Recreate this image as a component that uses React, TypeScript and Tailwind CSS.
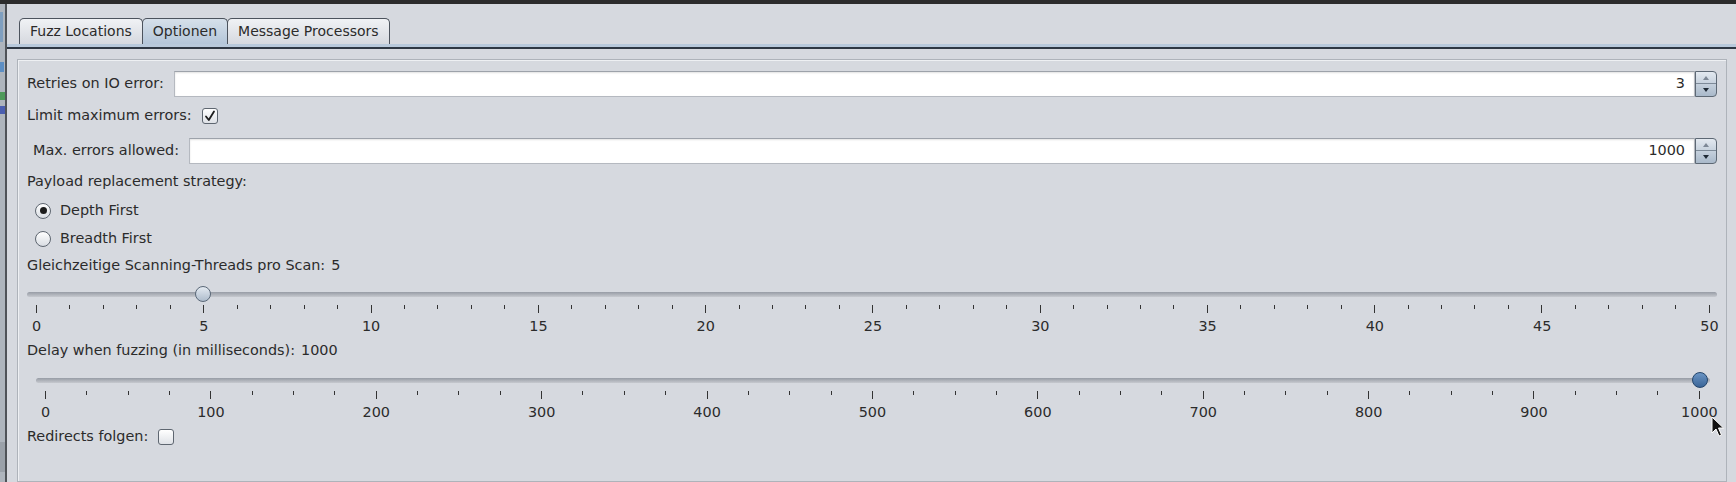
import React from 'react';

const TEXT = 'text-[14.4px] text-[#2b2b2b]';

function Spinner() {
  return (
    <div className="flex h-[26px] w-[22px] flex-col overflow-hidden rounded-r-[4px] border border-[#5d6874] bg-gradient-to-b from-[#e3e9f0] to-[#a9b9ca]">
      <div className="flex flex-1 items-center justify-center border-b border-[#7d8a98]">
        <div className="h-0 w-0 border-x-[3px] border-b-[4px] border-x-transparent border-b-[#7d8896]" />
      </div>
      <div className="flex flex-1 items-center justify-center">
        <div className="h-0 w-0 border-x-[3px] border-t-[4px] border-x-transparent border-t-[#1f2a36]" />
      </div>
    </div>
  );
}

function NumberField({ value }: { value: string }) {
  return (
    <div className="flex flex-1 items-center">
      <div className={`flex h-[26px] flex-1 items-center justify-end border border-[#b5b9c0] border-t-[#9da2aa] bg-white pr-[9px] shadow-[inset_0_1px_2px_rgba(0,0,0,0.12)] ${TEXT}`}>
        {value}
      </div>
      <Spinner />
    </div>
  );
}

function Checkbox({ checked }: { checked?: boolean }) {
  return (
    <div className="flex h-[16px] w-[16px] items-center justify-center rounded-[3px] border border-[#5e6670] bg-gradient-to-b from-[#ffffff] to-[#dfe2e7]">
      {checked && (
        <svg width="12" height="12" viewBox="0 0 12 12">
          <path d="M2 6.5 L4.8 10 L10 1.5" fill="none" stroke="#1e1e1e" strokeWidth="1.8" strokeLinecap="round" strokeLinejoin="round" />
        </svg>
      )}
    </div>
  );
}

function Radio({ checked, label }: { checked?: boolean; label: string }) {
  return (
    <div className="flex items-center gap-[9px] pl-[8px]">
      <div className="flex h-[16px] w-[16px] items-center justify-center rounded-full border border-[#5e6670] bg-gradient-to-b from-[#ffffff] to-[#d9dde3]">
        {checked && <div className="h-[7px] w-[7px] rounded-full bg-[#1c1c1c]" />}
      </div>
      <span className={TEXT}>{label}</span>
    </div>
  );
}

interface SliderProps {
  max: number;
  step: number;
  major: number;
  value: number;
  dark?: boolean;
  outer: string;
  thumbArea: string;
  tickArea: string;
}

function Slider({ max, step, major, value, dark, outer, thumbArea, tickArea }: SliderProps) {
  const ticks = Array.from({ length: max / step + 1 }, (_, i) => i * step);
  const labels = Array.from({ length: max / major + 1 }, (_, i) => i * major);
  const thumbClass = dark
    ? 'border-[#23456c] bg-gradient-to-b from-[#6b95c4] to-[#3a6598]'
    : 'border-[#5a6878] bg-gradient-to-b from-[#e4eaf1] to-[#aebccc]';

  return (
    <div className={`h-[60px] ${outer}`}>
      <div className="relative h-[27px] pt-[14px]">
        <div className="h-[5px] rounded-full bg-gradient-to-b from-[#979ca5] to-[#c6c9cf]" />
        <div className={`absolute inset-y-0 ${thumbArea}`}>
          <div
            className={`absolute top-[8px] -ml-[8px] h-[16px] w-[16px] rounded-full border ${thumbClass}`}
            style={{ left: `${(value / max) * 100}%` }}
          />
        </div>
      </div>
      <div className={tickArea}>
        <div className="flex h-[8px] items-start justify-between">
          {ticks.map((t) => (
            <div key={t} className={`w-px bg-[#333] ${t % major === 0 ? 'h-[8px]' : 'h-[4px]'}`} />
          ))}
        </div>
        <div className="mt-[5px] flex h-[17px] justify-between leading-[17px]">
          {labels.map((l) => (
            <div key={l} className="flex w-px justify-center">
              <span className={`whitespace-nowrap ${TEXT}`}>{l}</span>
            </div>
          ))}
        </div>
      </div>
    </div>
  );
}

function Tab({ label, active }: { label: string; active?: boolean }) {
  return (
    <div
      className={`-ml-px flex h-[26px] items-center rounded-t-[5px] border border-b-0 border-[#4c535d] px-[10px] text-[14px] text-[#2b2b2b] ${
        active ? 'bg-gradient-to-b from-[#d6e0ea] to-[#b4c6d9]' : 'bg-gradient-to-b from-[#f0f2f5] to-[#d6d9df]'
      }`}
    >
      {label}
    </div>
  );
}

export default function App() {
  return (
    <div className="relative h-[482px] w-[1736px] overflow-hidden bg-[#d6d9df] font-['DejaVu_Sans','Liberation_Sans',sans-serif]">
      <div className="h-[4px] bg-[#2c2c2c]" />
      <div className="flex h-[478px]">
        <div className="flex w-[5px] flex-col bg-[#aeb5bd]">
          <div className="mt-[8px] h-[30px] w-[3px] bg-[#7f9fbf]" />
          <div className="mt-[20px] h-[10px] w-[4px] bg-[#5d8fc4]" />
          <div className="mt-[20px] h-[8px] w-[5px] bg-[#4e9a5a]" />
          <div className="mt-[6px] h-[8px] w-[5px] bg-[#4b5fb0]" />
          <div className="mt-auto mb-[10px] h-[30px] w-[5px] bg-[#9aa1a9]" />
        </div>
        <div className="w-[2px] bg-[#4f5358]" />
        <div className="flex flex-1 flex-col">
          <div className="flex pl-[12px] pt-[14px]">
            <div className="ml-px flex">
              <Tab label="Fuzz Locations" />
              <Tab label="Optionen" active />
              <Tab label="Message Processors" />
            </div>
          </div>
          <div className="h-[3px] bg-[#b8c9db]" />
          <div className="h-[2px] bg-[#2e3743]" />
          <div className="ml-[10px] mr-[9px] mt-[10px] h-[440px] border border-[#aeb3ba] px-[9px] pt-[11px] shadow-[inset_1px_1px_0_#eef0f3]">
            <div className="flex h-[26px] items-center">
              <span className={TEXT}>Retries on IO error:</span>
              <div className="ml-[10px] flex flex-1">
                <NumberField value="3" />
              </div>
            </div>
            <div className="flex h-[38px] items-center">
              <span className={TEXT}>Limit maximum errors:</span>
              <div className="ml-[10px]">
                <Checkbox checked />
              </div>
            </div>
            <div className="flex h-[32px] items-center pl-[6px]">
              <span className={TEXT}>Max. errors allowed:</span>
              <div className="ml-[10px] flex flex-1">
                <NumberField value="1000" />
              </div>
            </div>
            <div className="flex h-[31px] items-center">
              <span className={TEXT}>Payload replacement strategy:</span>
            </div>
            <div className="flex h-[26px] items-center">
              <Radio checked label="Depth First" />
            </div>
            <div className="flex h-[30px] items-center">
              <Radio label="Breadth First" />
            </div>
            <div className="flex h-[24px] items-center gap-[6px]">
              <span className={TEXT}>Gleichzeitige Scanning-Threads pro Scan:</span>
              <span className={TEXT}>5</span>
            </div>
            <Slider
              max={50}
              step={1}
              major={5}
              value={5}
              outer=""
              thumbArea="left-[9px] right-[7px]"
              tickArea="pl-[9px] pr-[7px]"
            />
            <div className="flex h-[26px] items-center gap-[6px]">
              <span className={TEXT}>Delay when fuzzing (in milliseconds):</span>
              <span className={TEXT}>1000</span>
            </div>
            <Slider
              max={1000}
              step={25}
              major={100}
              value={1000}
              dark
              outer="ml-[9px] mr-[7px]"
              thumbArea="left-[9px] right-[10px]"
              tickArea="pl-[9px] pr-[10px]"
            />
            <div className="flex h-[26px] items-center">
              <span className={TEXT}>Redirects folgen:</span>
              <div className="ml-[10px]">
                <Checkbox />
              </div>
            </div>
          </div>
        </div>
      </div>
      <svg className="absolute left-[1711px] top-[416px]" width="14" height="22" viewBox="0 0 14 22">
        <path d="M1 1 L1 17 L5 13 L8 20 L10.5 19 L7.5 12 L12.5 12 Z" fill="#111" stroke="#fff" strokeWidth="1" strokeLinejoin="round" />
      </svg>
    </div>
  );
}
